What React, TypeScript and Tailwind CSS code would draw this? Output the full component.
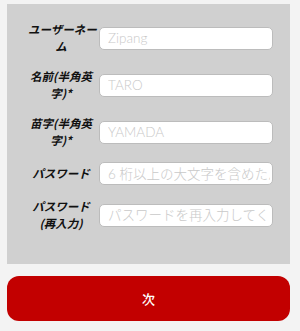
import type { ReactNode } from 'react'

const fields: { label: ReactNode; placeholder: string }[] = [
  { label: <>ユーザーネー<br />ム</>, placeholder: 'Zipang' },
  { label: <>名前(半角英<br />字)*</>, placeholder: 'TARO' },
  { label: <>苗字(半角英<br />字)*</>, placeholder: 'YAMADA' },
  { label: 'パスワード', placeholder: '6 桁以上の大文字を含めたパスワード' },
  { label: <>パスワード<br />(再入力)</>, placeholder: 'パスワードを再入力してください' },
]

export default function App() {
  return (
    <div
      className="min-h-[331px] w-[300px] bg-[#f3f3f3] pl-[7px] pr-[10px] pt-[4px]"
      style={{ fontFamily: '"Lato", "Noto Sans CJK JP", sans-serif' }}
    >
      <form className="flex flex-col gap-[13px] bg-[#d0d0d0] pb-[32px] pl-[21px] pr-[17px] pt-[17px]">
        {fields.map(({ label, placeholder }, i) => (
          <div key={i} className="flex items-center gap-[5px]">
            <label
              className="w-[66px] shrink-0 whitespace-nowrap text-center text-[11.5px] font-bold italic leading-[17px] text-[#111]"
              style={{ fontFamily: '"Noto Sans CJK JP", sans-serif' }}
            >
              {label}
            </label>
            <input
              type="text"
              placeholder={placeholder}
              className="h-[23px] min-w-0 flex-1 rounded-[5px] border border-[#bcbcbc] bg-white pl-[8px] pr-[2px] text-[13.5px] font-light text-[#333] outline-none placeholder:text-[#c9c9c9]"
            />
          </div>
        ))}
      </form>
      <button
        type="button"
        className="mt-[12px] flex h-[45px] w-full items-center justify-center rounded-[12px] bg-[#c20000] text-[13px] font-medium text-white"
        style={{ fontFamily: '"Noto Sans CJK JP", sans-serif' }}
      >
        次
      </button>
    </div>
  )
}
